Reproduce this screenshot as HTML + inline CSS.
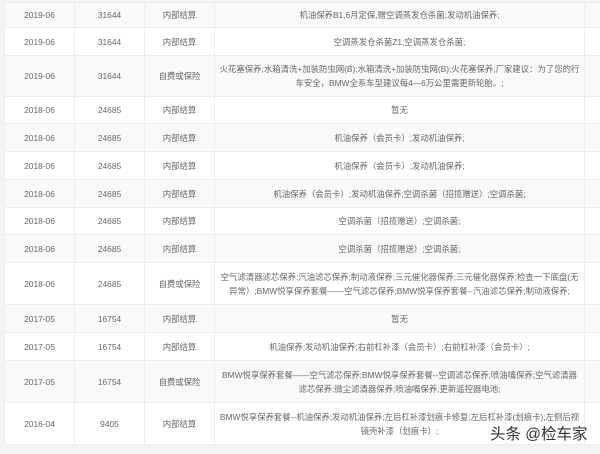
<!DOCTYPE html><html><head><meta charset="utf-8"><style>
body{margin:0;width:600px;height:454px;background:#f2f3f5;overflow:hidden;position:relative;font-family:"Liberation Sans","Noto Sans CJK SC",sans-serif;}
table{position:absolute;left:4px;top:2px;border-collapse:collapse;table-layout:fixed;width:600px;}
td{border:1px solid #ebedf0;text-align:center;color:#666;font-size:8.4px;line-height:14px;padding:0 3px;}
tr:nth-child(odd) td{background:#f9f9fa}
tr:nth-child(even) td{background:#fff}
.wm{position:absolute;left:490px;top:422px;font-size:15.5px;color:#333;font-family:"Liberation Sans","Noto Sans CJK SC",sans-serif;}
</style></head><body>
<table>
<colgroup><col style="width:70px"><col style="width:70px"><col style="width:70px"><col style="width:370px"><col style="width:20px"></colgroup>
<tr style="height:25px"><td>2019-06</td><td>31644</td><td>内部结算</td><td>机油保养B1,6月定保,赠空调蒸发仓杀菌;发动机油保养;</td><td></td></tr>
<tr style="height:28px"><td>2019-06</td><td>31644</td><td>内部结算</td><td>空调蒸发仓杀菌Z1;空调蒸发仓杀菌;</td><td></td></tr>
<tr style="height:41px"><td>2019-06</td><td>31644</td><td>自费或保险</td><td>火花塞保养;水箱清洗+加装防虫网(B);水箱清洗+加装防虫网(B);火花塞保养;厂家建议：为了您的行车安全，BMW全系车型建议每4—6万公里需更新轮胎。;</td><td></td></tr>
<tr style="height:27px"><td>2018-06</td><td>24685</td><td>内部结算</td><td>暂无</td><td></td></tr>
<tr style="height:28px"><td>2018-06</td><td>24685</td><td>内部结算</td><td>机油保养（会员卡）;发动机油保养;</td><td></td></tr>
<tr style="height:28px"><td>2018-06</td><td>24685</td><td>内部结算</td><td>机油保养（会员卡）;发动机油保养;</td><td></td></tr>
<tr style="height:28px"><td>2018-06</td><td>24685</td><td>内部结算</td><td>机油保养（会员卡）;发动机油保养;空调杀菌（招揽赠送）;空调杀菌;</td><td></td></tr>
<tr style="height:27px"><td>2018-06</td><td>24685</td><td>内部结算</td><td>空调杀菌（招揽赠送）;空调杀菌;</td><td></td></tr>
<tr style="height:28px"><td>2018-06</td><td>24685</td><td>内部结算</td><td>空调杀菌（招揽赠送）;空调杀菌;</td><td></td></tr>
<tr style="height:42px"><td>2018-06</td><td>24685</td><td>自费或保险</td><td>空气滤清器滤芯保养;汽油滤芯保养;制动液保养;三元催化器保养;三元催化器保养;检查一下底盘(无异常）;BMW悦享保养套餐——空气滤芯保养;BMW悦享保养套餐--汽油滤芯保养;制动液保养;</td><td></td></tr>
<tr style="height:28px"><td>2017-05</td><td>16754</td><td>内部结算</td><td>暂无</td><td></td></tr>
<tr style="height:28px"><td>2017-05</td><td>16754</td><td>内部结算</td><td>机油保养;发动机油保养;右前杠补漆（会员卡）;右前杠补漆（会员卡）;</td><td></td></tr>
<tr style="height:42px"><td>2017-05</td><td>16754</td><td>自费或保险</td><td>BMW悦享保养套餐——空气滤芯保养;BMW悦享保养套餐--空调滤芯保养;喷油嘴保养;空气滤清器滤芯保养;微尘滤清器保养;喷油嘴保养;更新遥控器电池;</td><td></td></tr>
<tr style="height:42px"><td>2016-04</td><td>9405</td><td>内部结算</td><td>BMW悦享保养套餐--机油保养;发动机油保养;左后杠补漆划痕卡修复;左后杠补漆(划痕卡);左侧后视镜壳补漆（划痕卡）;</td><td></td></tr>
</table>
<div class="wm">头条 @检车家</div>
</body></html>
